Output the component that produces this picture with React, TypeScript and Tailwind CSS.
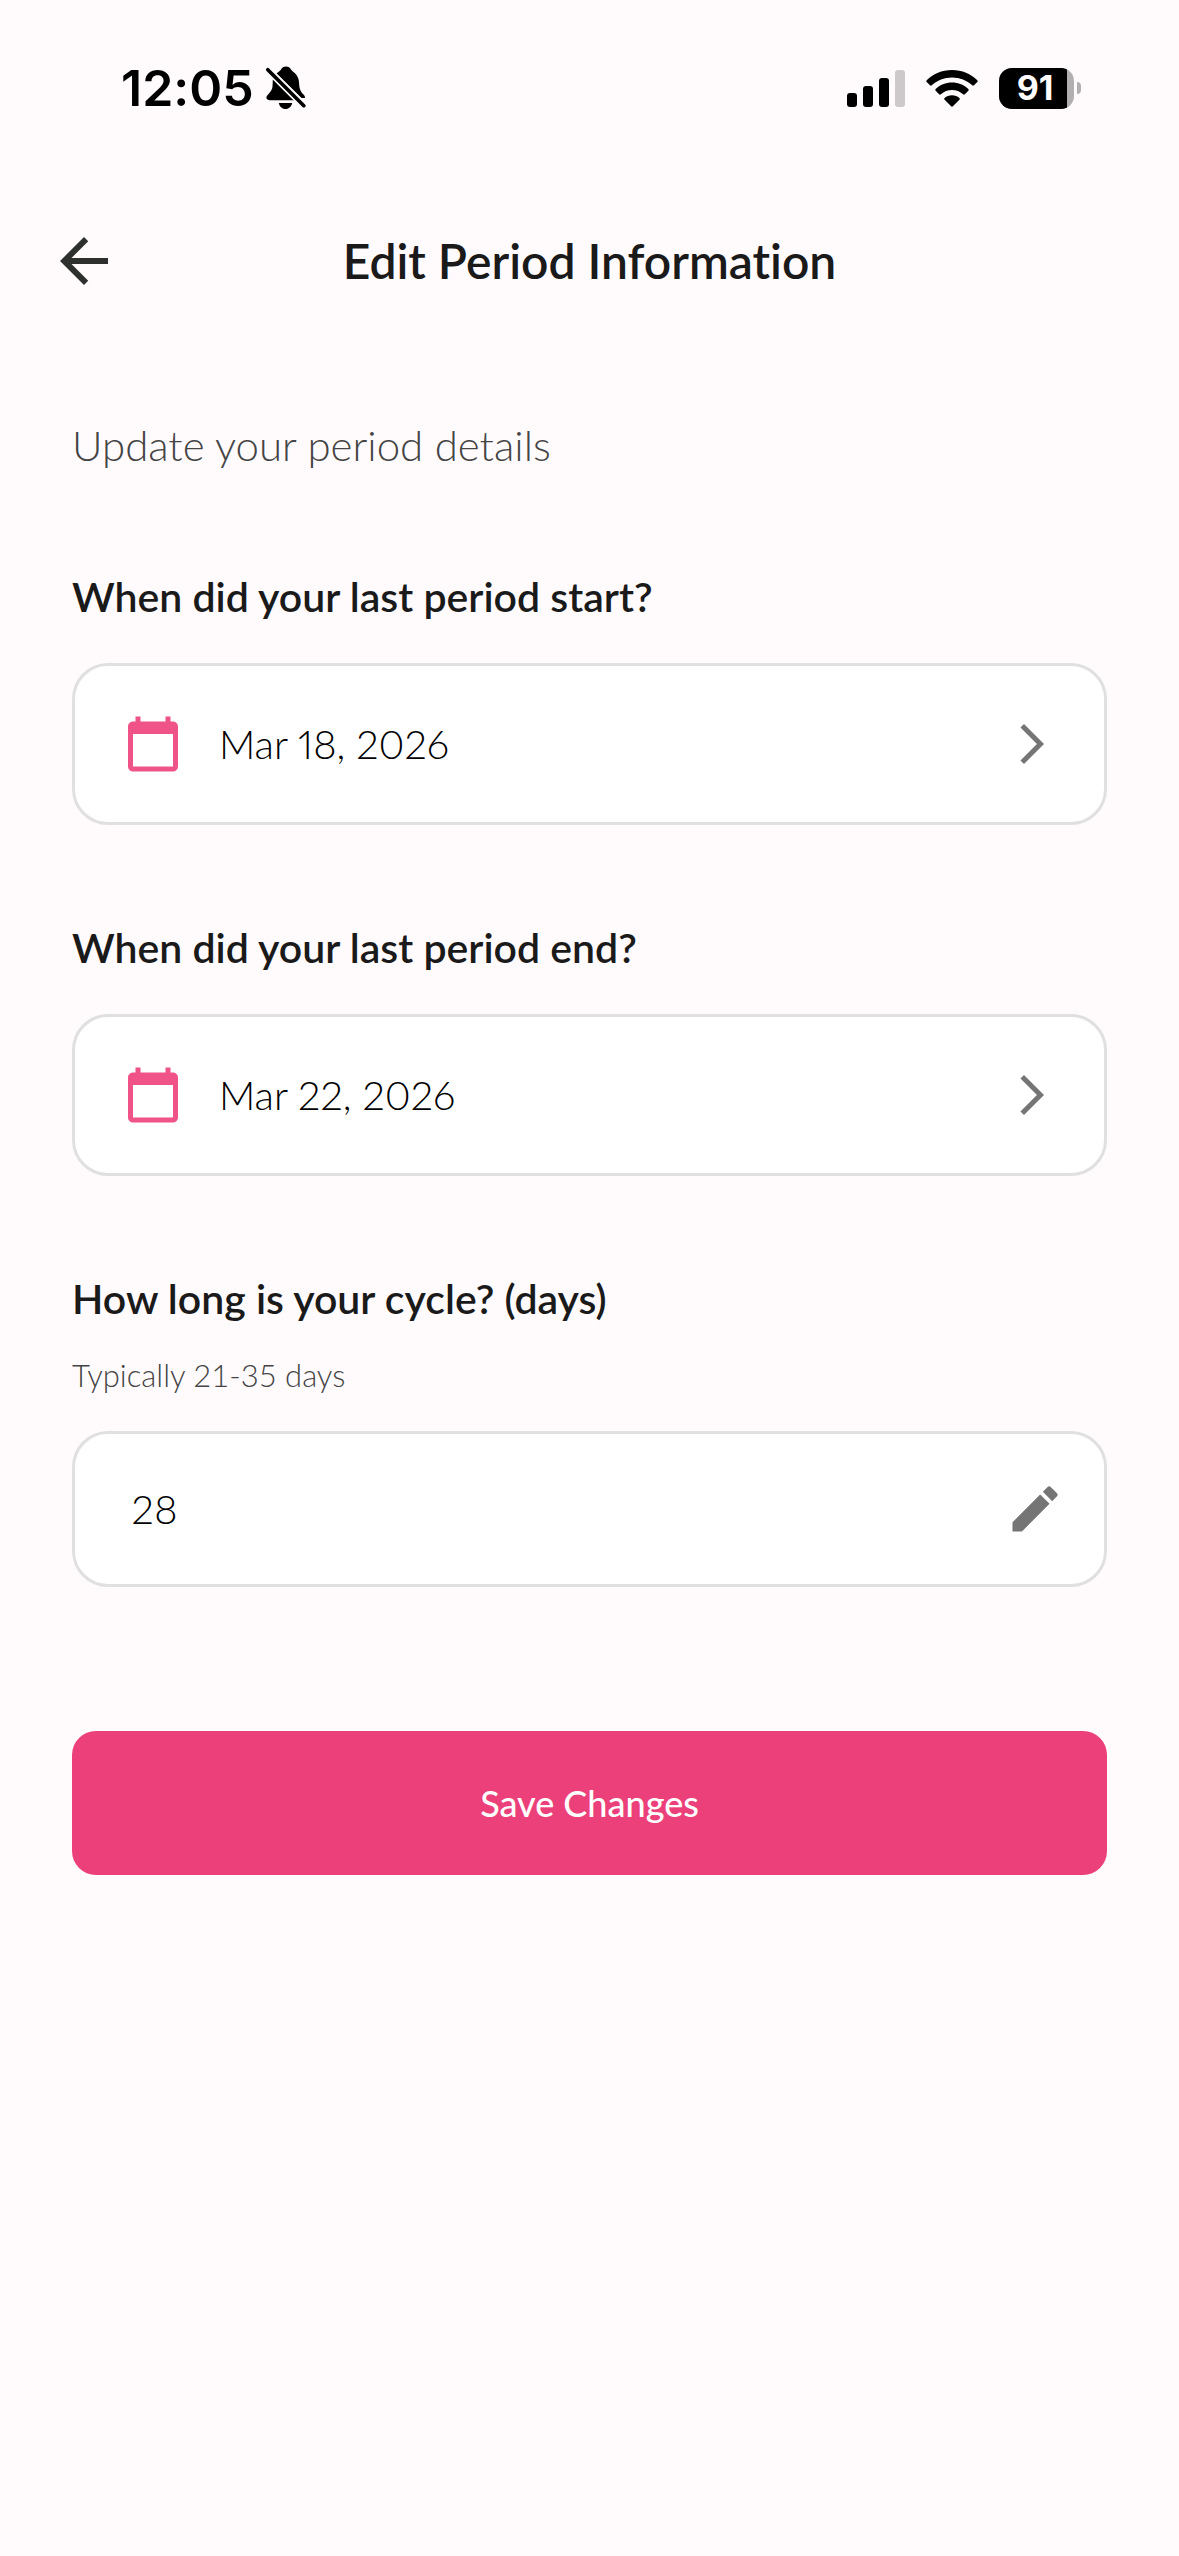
import { useState } from "react";
import {
  MdArrowBack,
  MdArrowForwardIos,
  MdCalendarToday,
  MdEdit,
} from "react-icons/md";

function BellSlash() {
  return (
    <svg viewBox="0 0 40 44" className="h-11 w-10" aria-label="Silent mode">
      <path
        d="M10.500 7.500C13 5.500 14 5 15 3.500C16 1.500 17.500 0.500 20 0.500C22.500 0.500 24 1.500 25 3.500C26 5.500 32.500 8 33 16C33.300 22 34 25 37.500 28.500C38.500 29.500 39 30.500 39 32H35.500Z M7 13L28 34.200H3.500C1 34.200 0 32.500 0.500 30.800C1.200 28.500 6 26 6.500 20.500C6.800 17 6.600 15 7 13Z M12.800 37H26.200C25.500 40.500 23 43 19.500 43C16 43 13.500 40.500 12.800 37Z"
        fill="#000"
      />
      <path d="M0 1.900L40 41.900" stroke="#fffbfd" strokeWidth="7" />
      <path d="M1.800 3.700L37.800 39.700" stroke="#000" strokeWidth="3.600" strokeLinecap="round" />
    </svg>
  );
}

function Signal() {
  return (
    <svg viewBox="0 0 58 38" className="h-[38px] w-[58px]" aria-label="Signal">
      <rect x="0" y="24" width="10" height="14" rx="3" />
      <rect x="16" y="17" width="10" height="21" rx="3" />
      <rect x="32" y="9" width="10" height="29" rx="3" />
      <rect x="48" y="1" width="10" height="37" rx="3" fill="#cdc9cb" />
    </svg>
  );
}

function Wifi() {
  return (
    <svg viewBox="0 0 52 38" className="h-[38px] w-[52px]" aria-label="Wi-Fi">
      <path d="M26 1C36 1 45 4.800 51.300 11.200C51.900 11.800 51.900 12.400 51.300 13L48 16.300C47.400 16.900 46.800 16.900 46.200 16.300C40.800 11.300 33.800 8.400 26 8.400C18.200 8.400 11.200 11.300 5.800 16.300C5.200 16.900 4.600 16.900 4 16.300L0.700 13C0.100 12.400 0.100 11.800 0.700 11.200C7 4.800 16 1 26 1Z" />
      <path d="M26 13.600C32.400 13.600 38 16 42.300 20C42.900 20.600 42.900 21.200 42.300 21.800L38.900 25.200C38.300 25.800 37.700 25.800 37.100 25.200C34.100 22.500 30.200 21 26 21C21.800 21 17.900 22.500 14.900 25.200C14.300 25.800 13.700 25.800 13.100 25.200L9.700 21.800C9.100 21.200 9.100 20.600 9.700 20C14 16 19.600 13.600 26 13.600Z" />
      <path d="M26 26.200C28.900 26.200 31.400 27.200 33.400 28.900C34 29.500 34 30.100 33.400 30.700L26.900 37.200C26.300 37.800 25.700 37.800 25.100 37.200L18.600 30.700C18 30.100 18 29.500 18.600 28.900C20.600 27.200 23.100 26.200 26 26.200Z" />
    </svg>
  );
}

function Battery() {
  return (
    <div className="flex items-center gap-[3px]">
      <div className="flex h-[41px] w-[75px] overflow-hidden rounded-[13px] bg-[#b2afb0]">
        <span className="flex w-[68px] items-center justify-center bg-black pl-1 text-[34px] leading-none font-bold text-[#fffbfd]">
          91
        </span>
      </div>
      <span className="h-3 w-1 rounded-r-full bg-[#b2afb0]" />
    </div>
  );
}

function DateField({ id, label, value }: { id: string; label: string; value: string }) {
  return (
    <div className="flex flex-col gap-[38px]">
      <label htmlFor={id} className="text-[41px] leading-[56px] font-semibold">
        {label}
      </label>
      <button
        id={id}
        type="button"
        className="flex h-[162px] w-full items-center gap-9 rounded-[36px] border-3 border-[#e0e0e0] bg-white px-12 text-left text-[40px] font-light text-black proportional-nums"
      >
        <MdCalendarToday className="size-[60px] shrink-0 text-[#f05387]" />
        <span className="flex-1">{value}</span>
        <MdArrowForwardIos className="size-12 shrink-0 text-[#757575]" />
      </button>
    </div>
  );
}

export default function App() {
  const [cycle, setCycle] = useState("28");
  return (
    <div className="min-h-screen bg-[#fffbfd] font-['Lato',sans-serif] text-[#1a1a1a] [font-variant-ligatures:none]">
      <div className="flex h-[177px] items-start justify-between pt-[58px] pr-[98px] pl-[121px] font-['Inter',sans-serif] text-black">
        <div className="flex h-[60px] items-center gap-3">
          <span className="text-[50px] leading-[60px] font-semibold">12:05</span>
          <BellSlash />
        </div>
        <div className="flex h-[60px] items-center gap-[21px]">
          <Signal />
          <Wifi />
          <Battery />
        </div>
      </div>

      <header className="grid h-[168px] grid-cols-[72px_1fr_72px] items-center px-12">
        <button type="button" aria-label="Back">
          <MdArrowBack className="size-[72px] text-[#2e302e]" />
        </button>
        <h1 className="text-center text-[48px] leading-[60px] font-semibold">
          Edit Period Information
        </h1>
      </header>

      <main className="flex flex-col px-[72px] pt-[72px]">
        <p className="text-[42px] leading-[56px] font-light text-[#444444]">Update your period details</p>

        <form className="mt-24 flex flex-col gap-[95px]" onSubmit={(e) => e.preventDefault()}>
          <DateField id="start" label="When did your last period start?" value="Mar 18, 2026" />
          <DateField id="end" label="When did your last period end?" value="Mar 22, 2026" />

          <div className="flex flex-col">
            <label htmlFor="cycle" className="text-[41px] leading-[56px] font-semibold">
              How long is your cycle? (days)
            </label>
            <p id="hint" className="mt-7 text-[31px] leading-[40px] font-light text-[#444444]">
              Typically 21-35 days
            </p>
            <div className="mt-9 flex h-[156px] items-center rounded-[36px] border-3 border-[#e0e0e0] bg-white pr-[39px] pl-14">
              <input
                id="cycle"
                inputMode="numeric"
                aria-describedby="hint"
                value={cycle}
                onChange={(e) => setCycle(e.target.value)}
                className="min-w-0 flex-1 bg-transparent text-[40px] font-light text-black outline-none"
              />
              <MdEdit className="size-[60px] shrink-0 text-[#757575]" />
            </div>
            <button
              type="submit"
              className="mt-36 h-36 w-full rounded-3xl bg-[#ec407a] text-[36px] font-medium text-white"
            >
              Save Changes
            </button>
          </div>
        </form>
      </main>
    </div>
  );
}
